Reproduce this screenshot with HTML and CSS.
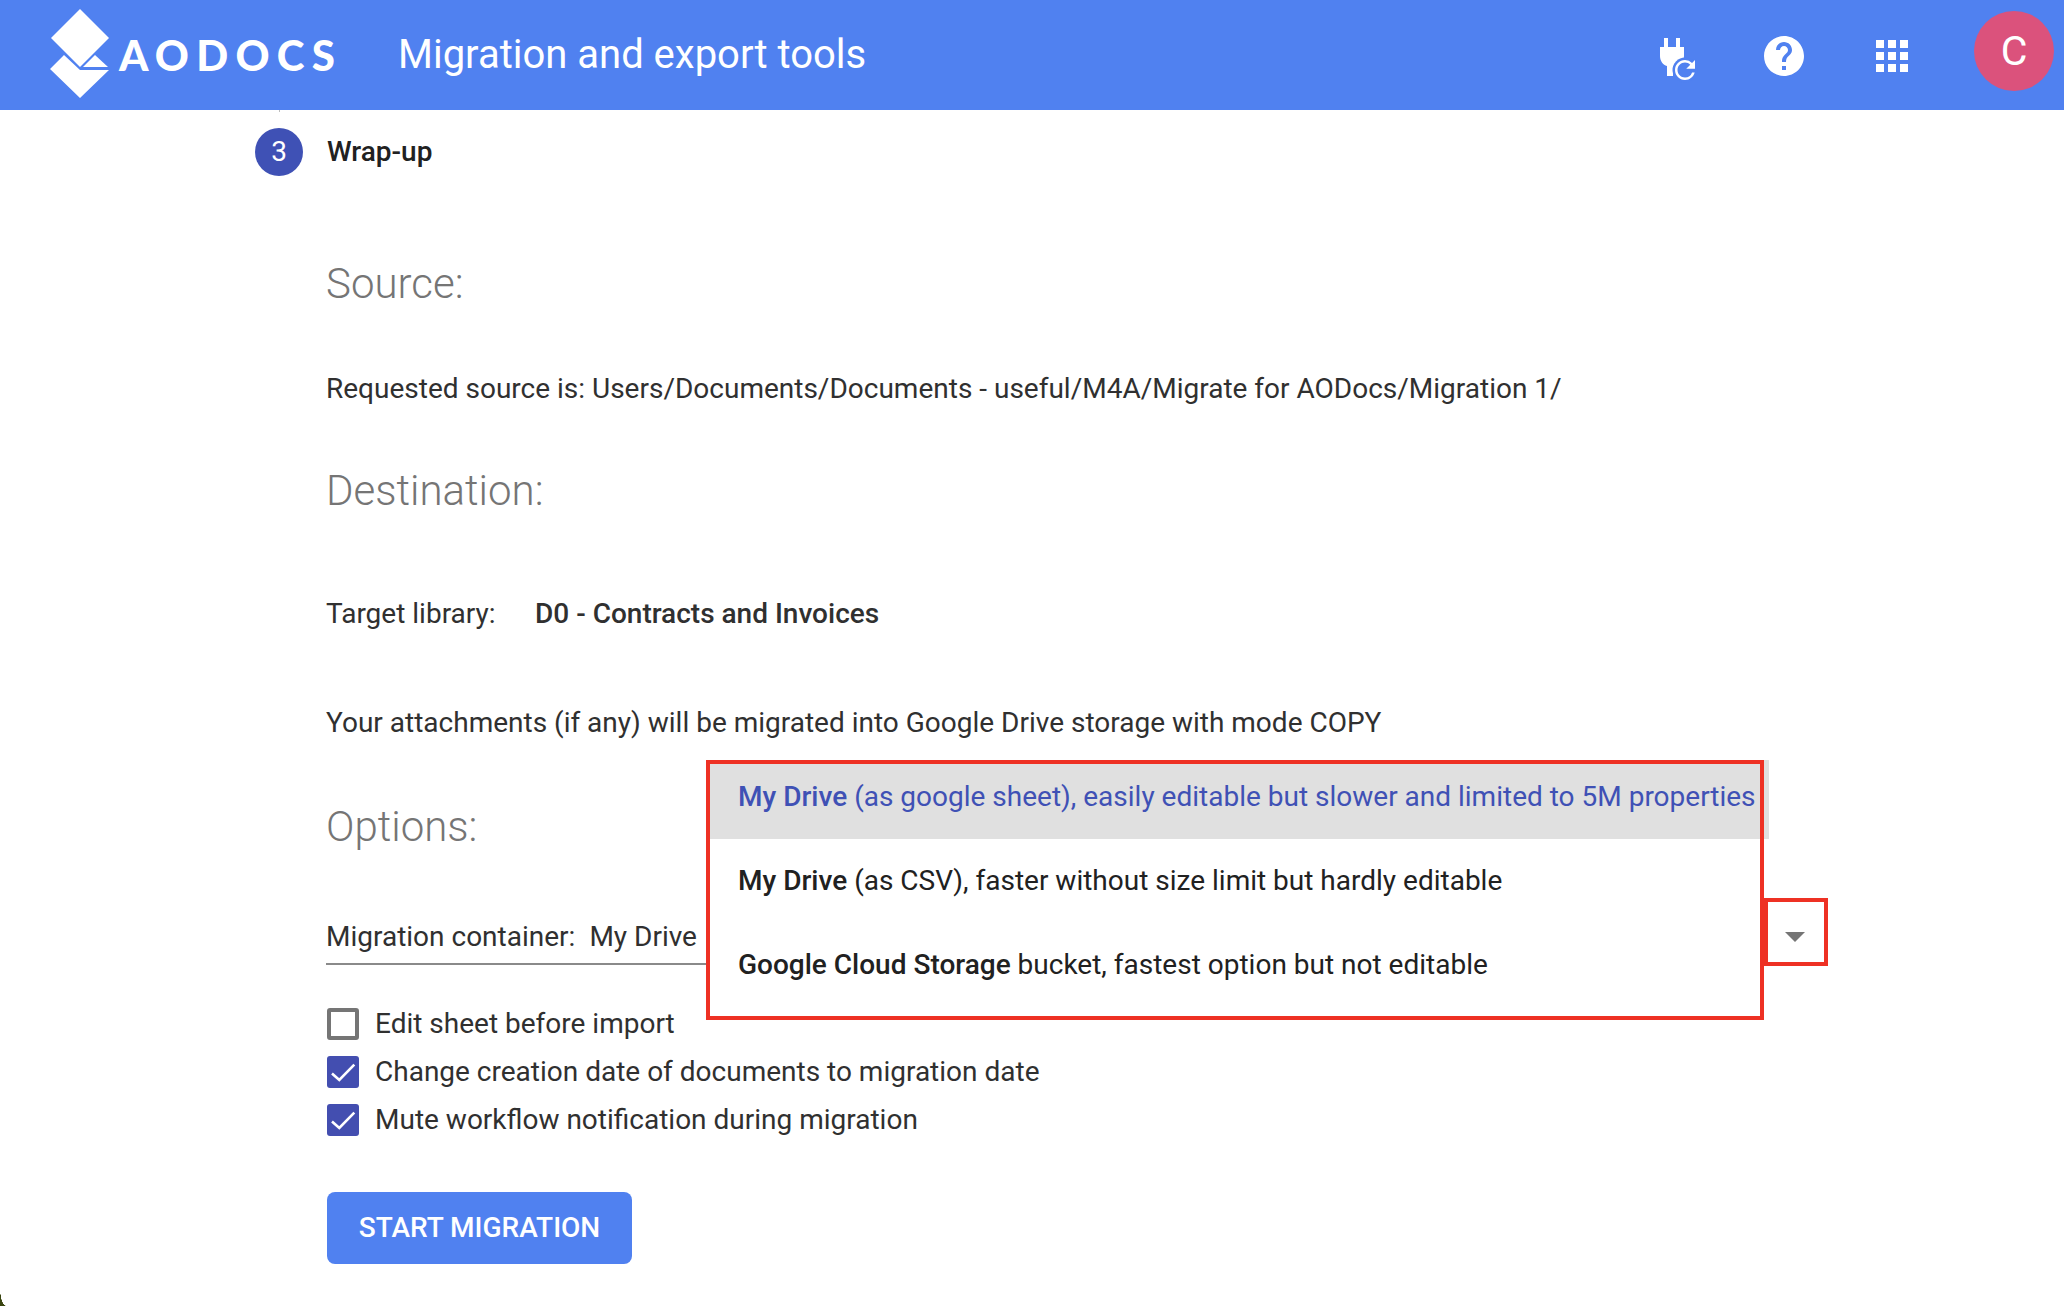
FILE: index.html
```html
<!DOCTYPE html>
<html lang="en">
<head>
<meta charset="utf-8">
<title>Migration and export tools</title>
<link rel="stylesheet" href="styles.css">
</head>
<body>
<header class="topbar">
  <div class="brand">
    <svg class="brand-mark" viewBox="0 0 60 100" aria-hidden="true">
      <polygon points="30,9 59,38 30,67 1,38" fill="#fff"/>
      <polygon points="14,55 30,70 59,70 30,98 0,69" fill="#fff"/>
      <polygon points="45,55 58,67 33,67" fill="#fff"/>
    </svg>
    <span class="brand-name">AODOCS</span>
  </div>
  <div class="title">Migration and export tools</div>
  <div class="actions">
    <svg class="icon-plug" viewBox="0 0 42 50" aria-hidden="true">
      <rect x="6" y="2" width="4" height="10" fill="#fff"/>
      <rect x="18" y="2" width="4" height="10" fill="#fff"/>
      <path d="M2 11H26V20C26 25 22 29 15 30V40H9V30C5 29 2 25 2 20Z" fill="#fff"/>
      <circle cx="27" cy="34" r="12.5" fill="#5081f0"/>
      <path transform="translate(12 19) scale(1.25)" fill="#fff" d="M17.65 6.35A7.958 7.958 0 0 0 12 4c-4.42 0-7.99 3.58-7.99 8s3.57 8 7.99 8c3.73 0 6.84-2.55 7.73-6h-2.08A5.99 5.99 0 0 1 12 18c-3.31 0-6-2.69-6-6s2.69-6 6-6c1.66 0 3.14.69 4.22 1.78L13 11h7V4l-2.35 2.35z"/>
    </svg>
    <svg class="icon" viewBox="0 0 24 24" aria-hidden="true"><path fill="#fff" d="M12 2C6.48 2 2 6.48 2 12s4.48 10 10 10 10-4.48 10-10S17.52 2 12 2zm1 17h-2v-2h2v2zm2.07-7.75l-.9.92C13.45 12.9 13 13.5 13 15h-2v-.5c0-1.1.45-2.1 1.17-2.83l1.24-1.26c.37-.36.59-.86.59-1.41 0-1.1-.9-2-2-2s-2 .9-2 2H8c0-2.21 1.79-4 4-4s4 1.79 4 4c0 .88-.36 1.68-.93 2.25z"/></svg>
    <svg class="icon" viewBox="0 0 24 24" aria-hidden="true"><path fill="#fff" d="M4 8h4V4H4v4zm6 12h4v-4h-4v4zm-6 0h4v-4H4v4zm0-6h4v-4H4v4zm6 0h4v-4h-4v4zm6-10v4h4V4h-4zm-6 4h4V4h-4v4zm6 6h4v-4h-4v4zm0 6h4v-4h-4v4z"/></svg>
    <div class="avatar">C</div>
  </div>
</header>

<main class="content">
  <div class="step-tick"></div>
  <div class="step">
    <span class="step-num">3</span>
    <span class="step-label">Wrap-up</span>
  </div>

  <h2 class="heading heading-source">Source:</h2>
  <p class="line line-request">Requested source is: Users/Documents/Documents - useful/M4A/Migrate for AODocs/Migration 1/</p>

  <h2 class="heading heading-dest">Destination:</h2>
  <p class="line line-target"><span class="target-label">Target library:</span><b class="strong">D0 - Contracts and Invoices</b></p>
  <p class="line line-attach">Your attachments (if any) will be migrated into Google Drive storage with mode COPY</p>

  <h2 class="heading heading-options">Options:</h2>

  <div class="select">
    <span class="select-value"><span class="select-label">Migration container:</span>My Drive</span>
    <span class="select-arrow"></span>
    <ul class="menu">
      <li class="menu-item menu-item-active"><b class="strong">My Drive</b> (as google sheet), easily editable but slower and limited to 5M properties</li>
      <li class="menu-item"><b class="strong">My Drive</b> (as CSV), faster without size limit but hardly editable</li>
      <li class="menu-item"><b class="strong">Google Cloud Storage</b> bucket, fastest option but not editable</li>
    </ul>
    <div class="mark mark-menu"></div>
    <div class="mark mark-arrow"></div>
  </div>

  <div class="checks">
    <div class="check">
      <span class="box"></span>Edit sheet before import
    </div>
    <div class="check">
      <span class="box box-on"><svg viewBox="0 0 32 32" aria-hidden="true"><path d="M5 17.5L12.3 24L27.3 8.7" fill="none" stroke="#fff" stroke-width="2.6"/></svg></span>Change creation date of documents to migration date
    </div>
    <div class="check">
      <span class="box box-on"><svg viewBox="0 0 32 32" aria-hidden="true"><path d="M5 17.5L12.3 24L27.3 8.7" fill="none" stroke="#fff" stroke-width="2.6"/></svg></span>Mute workflow notification during migration
    </div>
  </div>

  <button class="start" type="button">START MIGRATION</button>
</main>
<div class="corner"></div>
</body>
</html>
```
FILE: styles.css
```css
* { box-sizing: border-box; }
html, body { margin: 0; padding: 0; height: 1306px; overflow: hidden; background: #fff; }
body { position: relative; font-family: Roboto, "Liberation Sans", sans-serif; font-size: 28px; color: #303030; }

.topbar { height: 110px; background: #5081f0; color: #fff; display: flex; align-items: center; padding: 0 10px 0 50px; }
.brand { display: flex; align-items: center; width: 348px; height: 110px; }
.brand-mark { width: 60px; height: 100px; flex: none; align-self: flex-start; }
.brand-name { font-family: Lato, sans-serif; font-weight: 900; font-size: 42px; letter-spacing: 7.3px; margin-left: 9px; line-height: 1; }
.title { font-size: 40px; line-height: 50px; }
.actions { margin-left: auto; display: flex; align-items: center; }
.icon-plug { width: 42px; height: 50px; margin-right: 60px; margin-top: 12px; }
.icon { width: 48px; height: 48px; margin-right: 60px; margin-top: 2px; }
.icon + .icon { margin-right: 58px; }
.avatar { width: 80px; height: 80px; border-radius: 50%; background: #db527c; font-size: 41px; display: flex; align-items: center; justify-content: center; margin-top: -8px; }

.content { padding-left: 326px; }
.step-tick { width: 1px; height: 2px; background: #bdbdbd; margin-left: -47px; }
.step { display: flex; align-items: center; margin: 16px 0 0 -71px; height: 48px; }
.step-num { width: 48px; height: 48px; padding-bottom: 2px; border-radius: 50%; background: #3f51b5; color: #fff; display: flex; align-items: center; justify-content: center; font-size: 28px; margin-right: 24px; }
.step-label { font-weight: 500; color: #212121; margin-top: -2px; }

.heading { margin: 0; font-weight: 300; font-size: 42px; line-height: 60px; color: #757575; }
.heading-source { margin-top: 78px; }
.heading-dest { margin-top: 54px; }
.heading-options { margin-top: 56px; }
.line { margin: 0; line-height: 36px; }
.line-request { margin-top: 57px; }
.line-target { margin-top: 75px; }
.line-attach { margin-top: 73px; }
.strong { font-weight: 500; }
.target-label { display: inline-block; width: 209px; }

.select { position: relative; display: flex; justify-content: space-between; width: 1502px; margin-top: 62px; padding-bottom: 8px; border-bottom: 2px solid #8a8a8a; line-height: 36px; }
.select-label { margin-right: 14px; }
.select-arrow { width: 0; height: 0; border-left: 10px solid transparent; border-right: 10px solid transparent; border-top: 10px solid #757575; margin: 13px 23px 0 0; }
.menu { position: absolute; left: 380px; top: -159px; width: 1063px; height: 256px; margin: 0; padding: 0; list-style: none; background: #fff; color: #212121; white-space: nowrap; }
.menu-item { height: 84px; padding-left: 32px; display: flex; align-items: center; white-space: pre; }
.menu-item-active { height: 79px; padding-bottom: 5px; background: #e0e0e0; color: #3f51b5; }
.mark { position: absolute; border: 4px solid #ee3124; }
.mark-menu { left: 380px; top: -159px; width: 1058px; height: 260px; }
.mark-arrow { left: 1438px; top: -21px; width: 64px; height: 68px; }

.checks { margin-top: 35px; }
.check { display: flex; align-items: center; height: 48px; padding: 0 0 2px 1px; }
.box { width: 32px; height: 32px; border: 4px solid #757575; border-radius: 3px; margin: 2px 16px 0 0; flex: none; }
.box-on { border: 0; background: #434eb0; }
.box-on svg { display: block; width: 32px; height: 32px; }

.start { display: block; margin: 48px 0 0 1px; width: 305px; height: 72px; border: 0; border-radius: 8px; background: #5081f0; color: #fff; font-family: inherit; font-size: 28px; font-weight: 500; padding: 0 0 2px; }

.corner { position: absolute; left: 0; bottom: 0; width: 6px; height: 18px; background: radial-gradient(ellipse 6px 18px at 100% 0, transparent 97%, #3a4510 100%); }
```
